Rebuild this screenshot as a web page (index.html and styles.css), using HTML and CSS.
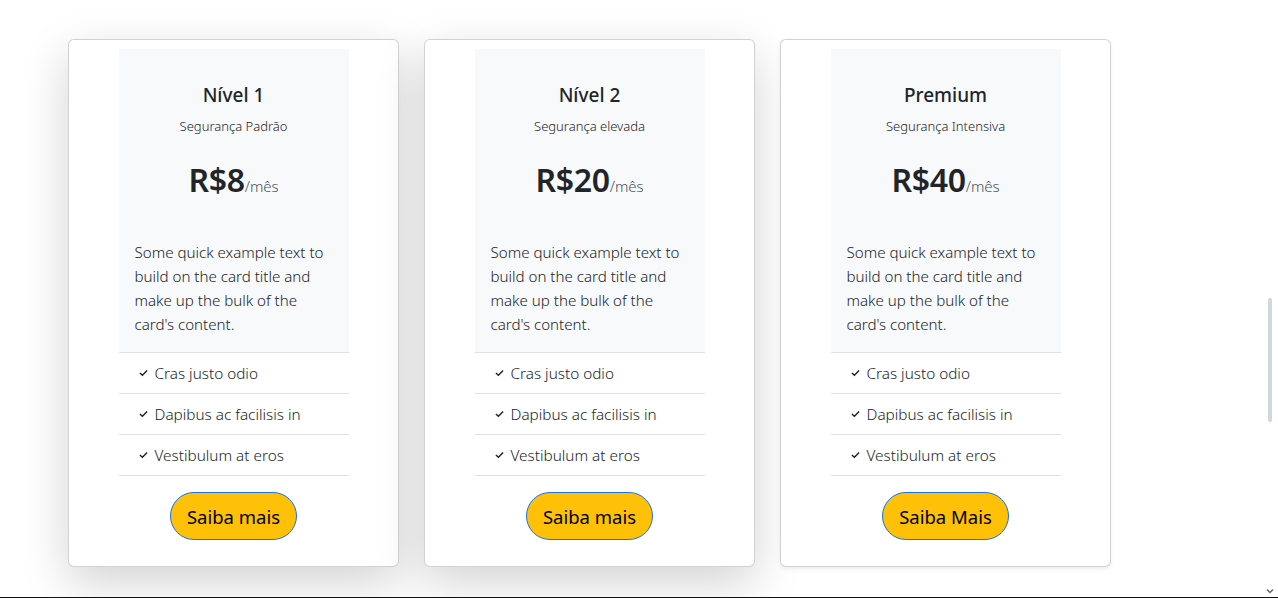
FILE: index.html
```html
<!DOCTYPE html>
<html lang="pt-BR">
<head>
<meta charset="utf-8">
<title>Planos</title>
<link rel="stylesheet" href="styles.css">
</head>
<body>
<main class="plans">
  <article class="card shadow-lg">
    <div class="panel">
      <h3 class="title">Nível 1</h3>
      <p class="subtitle">Segurança Padrão</p>
      <p class="price"><span class="amount">R$8</span><span class="period">/mês</span></p>
      <p class="text">Some quick example text to build on the card title and make up the bulk of the card's content.</p>
    </div>
    <ul class="features">
      <li><svg class="check" viewBox="0 0 10 8"><polyline points="1,4 3.8,6.6 9,1.2"/></svg>Cras justo odio</li>
      <li><svg class="check" viewBox="0 0 10 8"><polyline points="1,4 3.8,6.6 9,1.2"/></svg>Dapibus ac facilisis in</li>
      <li><svg class="check" viewBox="0 0 10 8"><polyline points="1,4 3.8,6.6 9,1.2"/></svg>Vestibulum at eros</li>
    </ul>
    <div class="actions"><button class="btn">Saiba mais</button></div>
  </article>
  <article class="card shadow-lg">
    <div class="panel">
      <h3 class="title">Nível 2</h3>
      <p class="subtitle">Segurança elevada</p>
      <p class="price"><span class="amount">R$20</span><span class="period">/mês</span></p>
      <p class="text">Some quick example text to build on the card title and make up the bulk of the card's content.</p>
    </div>
    <ul class="features">
      <li><svg class="check" viewBox="0 0 10 8"><polyline points="1,4 3.8,6.6 9,1.2"/></svg>Cras justo odio</li>
      <li><svg class="check" viewBox="0 0 10 8"><polyline points="1,4 3.8,6.6 9,1.2"/></svg>Dapibus ac facilisis in</li>
      <li><svg class="check" viewBox="0 0 10 8"><polyline points="1,4 3.8,6.6 9,1.2"/></svg>Vestibulum at eros</li>
    </ul>
    <div class="actions"><button class="btn">Saiba mais</button></div>
  </article>
  <article class="card shadow-sm">
    <div class="panel">
      <h3 class="title">Premium</h3>
      <p class="subtitle">Segurança Intensiva</p>
      <p class="price"><span class="amount">R$40</span><span class="period">/mês</span></p>
      <p class="text">Some quick example text to build on the card title and make up the bulk of the card's content.</p>
    </div>
    <ul class="features">
      <li><svg class="check" viewBox="0 0 10 8"><polyline points="1,4 3.8,6.6 9,1.2"/></svg>Cras justo odio</li>
      <li><svg class="check" viewBox="0 0 10 8"><polyline points="1,4 3.8,6.6 9,1.2"/></svg>Dapibus ac facilisis in</li>
      <li><svg class="check" viewBox="0 0 10 8"><polyline points="1,4 3.8,6.6 9,1.2"/></svg>Vestibulum at eros</li>
    </ul>
    <div class="actions"><button class="btn">Saiba Mais</button></div>
  </article>
</main>
<div class="scroll-thumb"></div>
<svg class="scroll-arrow" viewBox="0 0 8 6"><polyline points="1,1.5 4,4.5 7,1.5"/></svg>
<div class="frame-line"></div>
</body>
</html>
```

FILE: styles.css
```css
* { box-sizing: border-box; }
html, body { margin: 0; padding: 0; }
body {
  background: #fff;
  color: #212529;
  font-family: "Noto Sans", "Open Sans", "DejaVu Sans", sans-serif;
  overflow: hidden;
  height: 598px;
}
.plans {
  display: flex;
  gap: 25px;
  padding: 39px 0 0 68px;
  align-items: flex-start;
}
.card {
  width: 331px;
  height: 528px;
  background: #fff;
  border: 1px solid rgba(0,0,0,.175);
  border-radius: 6px;
  padding-top: 9px;
  display: flex;
  flex-direction: column;
  align-items: center;
}
.shadow-lg { box-shadow: 0 16px 48px rgba(0,0,0,.175); }
.shadow-sm { box-shadow: 0 2px 4px rgba(0,0,0,.075); }
.panel {
  width: 230px;
  background: #f8f9fa;
  padding: 32px 16px 16px;
  text-align: center;
}
.title {
  margin: 0;
  font-size: 19px;
  font-weight: 500;
  line-height: 28px;
}
.subtitle {
  margin: 7px 0 0;
  font-size: 13px;
  font-weight: 300;
  line-height: 20px;
}
.price {
  margin: 22px 0 0;
  line-height: 44px;
}
.amount {
  font-size: 32px;
  font-weight: 600;
  letter-spacing: -0.3px;
}
.period {
  font-size: 15px;
  font-weight: 300;
  color: #495057;
}
.text {
  margin: 32px 0 0;
  text-align: left;
  font-size: 15.1px;
  line-height: 24px;
  font-weight: 300;
}
.features {
  list-style: none;
  margin: 0;
  padding: 0;
  width: 230px;
  border-top: 1px solid #dee2e6;
}
.features li {
  height: 41px;
  border-bottom: 1px solid #dee2e6;
  display: flex;
  align-items: center;
  padding-left: 20px;
  font-size: 15.3px;
  font-weight: 300;
}
.check {
  width: 9px;
  height: 8px;
  margin-right: 7px;
  fill: none;
  stroke: #212529;
  stroke-width: 1.6;
}
.actions {
  margin-top: 16px;
}
.btn {
  height: 48px;
  padding: 0 16px;
  background: #ffc107;
  border: 1px solid #1a73e8;
  border-radius: 24px;
  font-family: inherit;
  font-size: 18.5px;
  color: #000;
  cursor: pointer;
}
.scroll-thumb {
  position: fixed;
  right: 6px;
  top: 298px;
  width: 4px;
  height: 124px;
  border-radius: 2px;
  background: #cfd8e0;
}
.scroll-arrow {
  position: fixed;
  right: 4px;
  bottom: 4px;
  width: 8px;
  height: 6px;
  fill: none;
  stroke: #666;
  stroke-width: 1.5;
}
.frame-line {
  position: fixed;
  left: 0;
  right: 0;
  bottom: 0;
  height: 1px;
  background: #111;
}
```
